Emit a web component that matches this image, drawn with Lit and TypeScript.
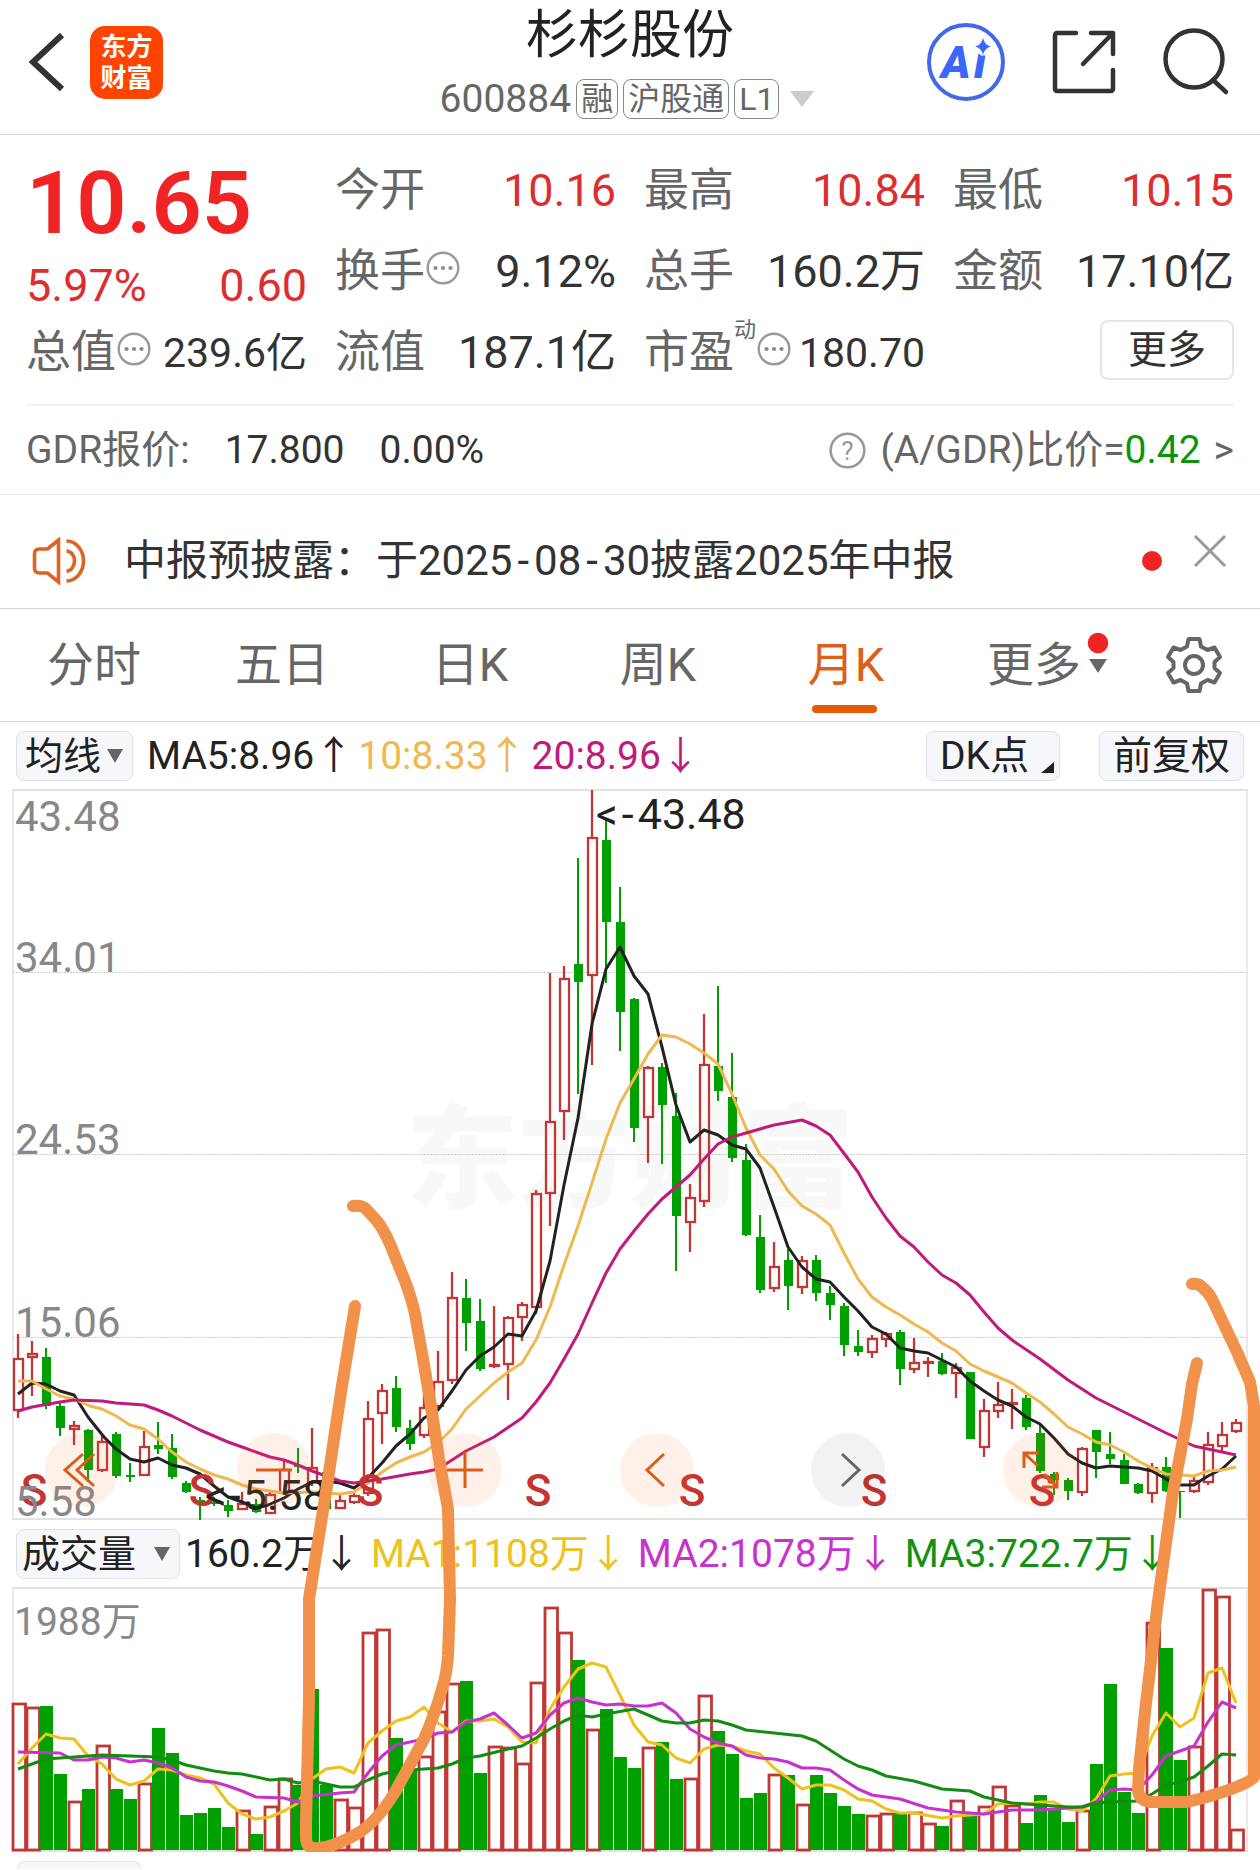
import { LitElement, html, svg, css } from "lit";
import { customElement, property, state } from "lit/decorators.js";
import { classMap } from "lit/directives/class-map.js";

type Candle = [kind: "r" | "g", high: number, top: number, bottom: number, low: number];

const STEP = 14;
const FIRST = 18;

const CANDLES: Candle[] = [
  ["r", 1335, 1359, 1412, 1419], ["r", 1342, 1354, 1359, 1397], ["g", 1349, 1358, 1407, 1410],
  ["g", 1402, 1407, 1429, 1437], ["r", 1422, 1426, 1431, 1446], ["g", 1430, 1431, 1471, 1483],
  ["r", 1437, 1442, 1472, 1473], ["g", 1433, 1435, 1477, 1479], ["g", 1464, 1476, 1478, 1483],
  ["r", 1432, 1447, 1477, 1477], ["g", 1423, 1446, 1450, 1455], ["g", 1435, 1449, 1478, 1480],
  ["g", 1482, 1484, 1493, 1494], ["g", 1498, 1501, 1503, 1521], ["g", 1498, 1503, 1505, 1507],
  ["g", 1501, 1506, 1512, 1518], ["r", 1493, 1504, 1511, 1511], ["g", 1500, 1505, 1513, 1514],
  ["r", 1493, 1495, 1515, 1515], ["r", 1462, 1470, 1495, 1496], ["g", 1449, 1466, 1468, 1474],
  ["r", 1429, 1468, 1484, 1487], ["g", 1468, 1473, 1510, 1511], ["r", 1496, 1501, 1510, 1510],
  ["r", 1493, 1496, 1504, 1505], ["r", 1402, 1419, 1495, 1497], ["r", 1385, 1391, 1415, 1445],
  ["g", 1377, 1389, 1428, 1433], ["g", 1421, 1429, 1445, 1451], ["r", 1395, 1408, 1437, 1439],
  ["r", 1352, 1382, 1408, 1410], ["r", 1273, 1298, 1382, 1385], ["g", 1280, 1299, 1324, 1352],
  ["g", 1300, 1322, 1370, 1372], ["r", 1307, 1365, 1367, 1369], ["r", 1317, 1318, 1366, 1401],
  ["r", 1303, 1305, 1319, 1342], ["r", 1191, 1194, 1309, 1315], ["r", 974, 1122, 1195, 1227],
  ["r", 967, 979, 1113, 1141], ["g", 859, 965, 983, 1095], ["r", 791, 838, 977, 1066],
  ["g", 820, 841, 923, 984], ["g", 888, 923, 1013, 1052], ["g", 999, 1000, 1129, 1143],
  ["r", 1067, 1068, 1119, 1164], ["g", 1064, 1068, 1106, 1165], ["g", 1094, 1117, 1217, 1272],
  ["r", 1185, 1198, 1224, 1253], ["r", 1015, 1065, 1203, 1208], ["g", 987, 1067, 1092, 1102],
  ["g", 1054, 1098, 1159, 1163], ["g", 1145, 1161, 1236, 1237], ["g", 1216, 1238, 1291, 1294],
  ["r", 1243, 1267, 1290, 1293], ["g", 1250, 1261, 1287, 1311], ["r", 1257, 1261, 1289, 1295],
  ["g", 1256, 1261, 1294, 1302], ["g", 1287, 1294, 1306, 1321], ["g", 1304, 1307, 1346, 1357],
  ["g", 1331, 1347, 1353, 1357], ["r", 1336, 1339, 1354, 1359], ["r", 1333, 1334, 1341, 1348],
  ["g", 1331, 1333, 1370, 1386], ["r", 1339, 1363, 1371, 1374], ["r", 1358, 1362, 1365, 1378],
  ["g", 1354, 1362, 1375, 1376], ["r", 1364, 1368, 1375, 1399], ["g", 1373, 1373, 1440, 1440],
  ["r", 1400, 1411, 1449, 1458], ["r", 1383, 1405, 1413, 1419], ["r", 1390, 1403, 1406, 1430],
  ["g", 1396, 1399, 1428, 1431], ["g", 1425, 1434, 1472, 1474], ["g", 1473, 1475, 1481, 1496],
  ["g", 1479, 1481, 1492, 1501], ["r", 1448, 1449, 1494, 1497], ["g", 1431, 1431, 1453, 1479],
  ["g", 1433, 1455, 1460, 1465], ["g", 1455, 1461, 1485, 1485], ["g", 1484, 1485, 1494, 1495],
  ["r", 1464, 1468, 1495, 1504], ["g", 1458, 1468, 1492, 1493], ["g", 1492, 1492, 1493, 1519],
  ["r", 1478, 1481, 1493, 1494], ["r", 1433, 1445, 1484, 1486], ["r", 1423, 1435, 1448, 1452],
  ["r", 1420, 1423, 1433, 1434],
];

/* Tops of the volume bars; each bar stands on VOLUME_BASE. */
const VOLUME_BASE = 1851;
const VOLUMES = [
  1704, 1708, 1707, 1775, 1802, 1790, 1746, 1790, 1800, 1784, 1729, 1754, 1816, 1814, 1809, 1828,
  1811, 1835, 1807, 1779, 1786, 1690, 1786, 1800, 1808, 1633, 1630, 1739, 1770, 1757, 1712, 1684,
  1682, 1774, 1747, 1748, 1764, 1683, 1608, 1633, 1661, 1730, 1710, 1758, 1769, 1748, 1743, 1780,
  1779, 1696, 1732, 1755, 1799, 1794, 1775, 1776, 1805, 1776, 1794, 1807, 1815, 1816, 1814, 1814,
  1813, 1824, 1827, 1801, 1816, 1807, 1787, 1806, 1824, 1796, 1810, 1823, 1811, 1765, 1685, 1793,
  1814, 1623, 1649, 1761, 1747, 1590, 1597, 1830,
];
/* Months whose volume bar is green although the candle is hollow. */
const FALLING_VOLUME = new Set([21]);

const MA5 =
  "18,1395 32,1384 46,1385 60,1392 74,1396 88,1418 104,1438 116,1450 130,1460 144,1463 158,1459 172,1466 186,1469 200,1475 214,1487 228,1498 242,1503 257,1509 268,1506 284,1499 298,1490 312,1483 326,1482 340,1484 354,1489 368,1479 382,1464 396,1447 410,1435 424,1419 438,1411 452,1392 466,1371 480,1357 494,1348 508,1335 522,1337 536,1312 550,1262 564,1186 578,1119 592,1025 606,970 620,948 634,977 648,995 662,1048 676,1106 690,1143 704,1131 718,1136 732,1146 746,1150 760,1169 774,1208 788,1248 802,1268 816,1280 830,1283 844,1298 858,1312 872,1328 886,1335 900,1349 914,1352 928,1354 942,1361 956,1368 970,1382 984,1392 998,1401 1012,1407 1026,1418 1040,1425 1054,1439 1068,1455 1082,1464 1096,1469 1110,1467 1124,1468 1138,1469 1152,1472 1166,1480 1180,1486 1194,1486 1208,1477 1222,1470 1236,1457";
const MA10 =
  "18,1382 32,1382 46,1390 60,1397 74,1400 90,1407 102,1410 116,1417 130,1426 144,1430 158,1440 172,1453 186,1463 200,1470 214,1476 228,1480 242,1486 256,1490 284,1494 312,1493 340,1495 354,1493 368,1484 382,1473 396,1464 410,1458 424,1453 438,1444 452,1430 466,1410 494,1384 508,1373 522,1364 536,1341 550,1308 564,1266 578,1227 592,1184 606,1140 620,1104 634,1080 648,1055 662,1036 676,1038 690,1045 704,1054 718,1065 732,1095 746,1129 760,1156 774,1170 788,1192 802,1207 816,1215 830,1226 844,1254 858,1280 872,1298 886,1308 900,1316 914,1325 928,1333 942,1344 956,1352 970,1365 984,1372 998,1378 1012,1384 1026,1394 1040,1403 1054,1415 1068,1428 1082,1435 1096,1443 1110,1446 1124,1453 1138,1462 1152,1469 1166,1475 1180,1476 1194,1477 1208,1472 1222,1471 1236,1468";
const MA20 =
  "18,1412 32,1408 60,1403 74,1401 102,1402 116,1404 144,1406 158,1411 172,1417 200,1431 228,1443 242,1448 270,1458 284,1461 298,1466 312,1472 326,1477 340,1482 354,1484 382,1480 410,1475 424,1473 438,1470 452,1461 466,1452 494,1438 522,1419 536,1403 550,1384 564,1360 578,1335 592,1304 606,1274 620,1250 634,1232 648,1215 662,1200 676,1188 690,1176 704,1160 718,1145 732,1138 760,1130 774,1126 802,1121 816,1127 830,1136 846,1157 858,1173 872,1198 886,1219 900,1237 914,1248 928,1263 942,1276 956,1284 970,1296 984,1313 998,1329 1012,1341 1040,1360 1068,1381 1096,1399 1124,1413 1152,1427 1166,1434 1194,1447 1222,1453 1236,1456";

const VOL_MA1 =
  "18,1765 32,1749 46,1735 60,1739 74,1740 88,1757 102,1765 116,1780 130,1786 144,1782 158,1770 172,1771 186,1776 200,1779 214,1785 228,1804 242,1815 256,1820 270,1818 284,1812 298,1804 312,1780 326,1770 340,1768 354,1774 368,1744 382,1732 396,1722 410,1718 424,1708 438,1724 452,1733 466,1722 480,1722 494,1720 508,1728 522,1743 536,1744 550,1710 564,1688 578,1670 592,1664 606,1668 620,1696 634,1726 648,1743 662,1746 676,1759 690,1764 704,1750 718,1746 732,1747 746,1752 760,1755 774,1769 788,1779 802,1790 816,1786 830,1786 844,1791 858,1800 872,1802 886,1810 900,1814 914,1814 942,1819 956,1817 970,1816 984,1815 998,1805 1012,1804 1026,1805 1040,1803 1054,1803 1068,1810 1082,1812 1096,1800 1110,1777 1124,1775 1138,1774 1152,1737 1166,1714 1180,1728 1194,1719 1208,1674 1222,1669 1236,1704";
const VOL_MA2 =
  "18,1753 60,1754 74,1761 88,1761 102,1758 116,1759 130,1763 144,1761 158,1764 172,1769 186,1778 200,1782 214,1783 228,1787 242,1792 256,1798 284,1799 298,1803 312,1797 340,1794 354,1793 368,1774 382,1757 396,1746 424,1740 438,1734 452,1733 466,1723 480,1720 494,1714 508,1726 522,1739 536,1734 550,1716 564,1704 578,1699 592,1703 606,1706 620,1705 634,1707 648,1707 662,1704 676,1714 690,1730 704,1738 718,1744 732,1747 746,1756 760,1759 774,1760 788,1763 802,1769 816,1769 830,1771 844,1781 858,1790 872,1796 900,1800 928,1809 956,1813 984,1815 1012,1811 1040,1811 1068,1809 1082,1808 1096,1803 1110,1791 1124,1790 1138,1791 1152,1776 1166,1757 1180,1752 1194,1747 1208,1723 1222,1703 1236,1709";
const VOL_MA3 =
  "18,1770 46,1760 74,1758 102,1756 130,1757 158,1758 172,1761 186,1766 200,1769 214,1772 228,1774 242,1775 270,1781 284,1780 298,1784 312,1782 340,1788 354,1788 368,1781 382,1775 396,1772 424,1770 438,1769 452,1765 466,1759 480,1757 508,1750 522,1747 536,1739 550,1730 564,1722 578,1716 592,1718 606,1715 634,1710 648,1716 662,1722 676,1724 690,1724 704,1721 718,1722 732,1726 746,1731 774,1734 802,1737 816,1742 830,1751 844,1760 858,1767 872,1771 886,1777 914,1782 942,1790 970,1792 984,1798 1012,1804 1040,1806 1068,1808 1082,1808 1096,1804 1110,1803 1138,1802 1152,1795 1166,1786 1180,1783 1194,1778 1208,1767 1222,1755 1236,1756";

const FONT = css`
  :host {
    display: block;
    font-family: Roboto, "Noto Sans CJK SC", sans-serif;
    line-height: 48px;
    color: #333;
  }
  * {
    box-sizing: border-box;
  }
  button,
  select {
    font: inherit;
    color: inherit;
    background: none;
    border: 0;
    padding: 0;
    margin: 0;
    cursor: pointer;
  }
  button {
    display: flex;
    align-items: center;
    justify-content: center;
  }
  svg {
    display: block;
    flex: none;
  }
`;

const dotsIcon = html`<svg width="34" height="34" viewBox="0 0 34 34" aria-hidden="true">
  <circle cx="17" cy="17" r="15.3" fill="none" stroke="#999" stroke-width="2.4" />
  <g fill="#8a8a8a"><circle cx="9.5" cy="17" r="2.1" /><circle cx="17" cy="17" r="2.1" /><circle cx="24.5" cy="17" r="2.1" /></g>
</svg>`;

@customElement("stock-header")
class StockHeader extends LitElement {
  static styles = [
    FONT,
    css`
      .bar {
        display: grid;
        grid-template-columns: 1fr auto 1fr;
        height: 135px;
        border-bottom: 1px solid #d4d4d4;
      }
      .side {
        display: flex;
        align-items: center;
        padding: 0 30px 10px 28px;
      }
      .left {
        gap: 22px;
      }
      .right {
        justify-content: flex-end;
        gap: 46px;
      }
      .logo {
        width: 73px;
        height: 73px;
        border-radius: 15px;
        background: #ff4400;
        color: #fff;
        font: 700 26px/31px "Noto Sans CJK SC", sans-serif;
        text-align: center;
        padding: 3px 8px;
      }
      .middle {
        display: flex;
        flex-direction: column;
        align-items: center;
      }
      h1 {
        margin: 0;
        font-size: 52px;
        font-weight: 400;
        line-height: 72px;
        color: #222;
      }
      .sub {
        display: flex;
        align-items: center;
        gap: 5px;
        height: 54px;
        color: #666;
        font-size: 39px;
        line-height: 40px;
      }
      .tag {
        height: 40px;
        border: 1px solid #888;
        border-radius: 8px;
        padding: 0 4px;
        font-size: 32px;
        line-height: 38px;
      }
      .more {
        padding: 0 6px;
      }
      .ai {
        font: italic 900 45px Roboto, sans-serif;
      }
    `,
  ];

  render() {
    return html`<header class="bar">
      <div class="side left">
        <button aria-label="返回">
          <svg width="40" height="64" viewBox="0 0 40 64" fill="none" stroke="#333" stroke-width="6"><path d="M34 5 5 32 34 59" /></svg>
        </button>
        <div class="logo">东方财富</div>
      </div>
      <div class="middle">
        <h1>杉杉股份</h1>
        <div class="sub">
          <span>600884</span><span class="tag">融</span><span class="tag">沪股通</span><span class="tag">L1</span>
          <button class="more" aria-label="展开">
            <svg width="24" height="16" viewBox="0 0 24 16"><path d="M0 0h24L12 16z" fill="#ccc" /></svg>
          </button>
        </div>
      </div>
      <div class="side right">
        <button aria-label="Ai">
          <svg width="80" height="80" viewBox="0 0 80 80">
            <circle cx="40" cy="40" r="37" fill="none" stroke="#4169e8" stroke-width="4" />
            <text class="ai" x="15 48" y="56" fill="#3a66fa">Ai</text>
            <path d="M57 16q1.500 7 8 8.500q-6.500 1.500-8 8.500q-1.500-7-8-8.500q6.500-1.500 8-8.500z" fill="#3a66fa" stroke="#fff" stroke-width="5" paint-order="stroke" />
          </svg>
        </button>
        <button aria-label="分享">
          <svg width="64" height="64" viewBox="0 0 64 64" fill="none" stroke="#333" stroke-width="4.500" stroke-linecap="round" stroke-linejoin="round">
            <path d="M24 3H5a2 2 0 0 0-2 2V59a2 2 0 0 0 2 2H59a2 2 0 0 0 2-2V40M39 3H61V24M60 4 31 34" />
          </svg>
        </button>
        <button aria-label="搜索">
          <svg width="68" height="68" viewBox="0 0 68 68" fill="none" stroke="#333" stroke-width="4.500" stroke-linecap="round">
            <circle cx="32" cy="31" r="28.500" /><path d="M51 52 64 64" />
          </svg>
        </button>
      </div>
    </header>`;
  }
}

@customElement("quote-panel")
class QuotePanel extends LitElement {
  static styles = [
    FONT,
    css`
      .quote {
        display: grid;
        grid-template-columns: repeat(4, 1fr);
        grid-auto-rows: 81px;
        column-gap: 28px;
        margin: 0 26px;
        padding: 15px 0 11px;
        border-bottom: 2px solid #f3f3f3;
        font-size: 45px;
        line-height: 82px;
      }
      .price {
        grid-row: span 2;
        color: #f02424;
      }
      .last {
        font-size: 88px;
        font-weight: 600;
        line-height: 106px;
      }
      .change {
        display: flex;
        justify-content: space-between;
        line-height: 60px;
        color: #db2f2f;
      }
      .item {
        display: flex;
        align-items: center;
        justify-content: space-between;
        white-space: nowrap;
      }
      .label {
        display: flex;
        align-items: center;
        color: #666;
      }
      .label svg {
        margin: 0 0 8px 1px;
      }
      sup {
        align-self: flex-start;
        font-size: 22px;
        line-height: 36px;
      }
      .up {
        color: #db2f2f;
      }
      .small {
        font-size: 41px;
      }
      .more {
        justify-self: end;
        align-self: start;
        width: 134px;
        height: 60px;
        margin-top: 8px;
        border: 2px solid #e6e6e6;
        border-radius: 8px;
        font-size: 39px;
        line-height: 56px;
      }
      .gdr {
        display: flex;
        align-items: center;
        height: 89px;
        padding: 0 26px;
        border-bottom: 1px solid #e6e6e6;
        font-size: 39px;
      }
      .gray {
        color: #666;
      }
      .gdr .num {
        margin-left: 35px;
      }
      .ratio {
        display: flex;
        align-items: center;
        margin-left: auto;
        color: #666;
        text-decoration: none;
      }
      .ratio svg {
        margin-right: 14px;
      }
      .ratio .down {
        color: #0c930c;
        margin-right: 13px;
      }
      .q {
        font-size: 26px;
      }
    `,
  ];

  private item(label: string, value: string, opts: { up?: boolean; info?: boolean; small?: boolean; sup?: string } = {}) {
    return html`<div class="item">
      <span class="label">${label}${opts.sup ? html`<sup>${opts.sup}</sup>` : null}${opts.info ? dotsIcon : null}</span>
      <span class=${classMap({ up: !!opts.up, small: !!opts.small })}>${value}</span>
    </div>`;
  }

  render() {
    return html`<section class="quote">
        <div class="price">
          <div class="last">10.65</div>
          <div class="change"><span>5.97%</span><span>0.60</span></div>
        </div>
        ${this.item("今开", "10.16", { up: true })} ${this.item("最高", "10.84", { up: true })}
        ${this.item("最低", "10.15", { up: true })} ${this.item("换手", "9.12%", { info: true })}
        ${this.item("总手", "160.2万")} ${this.item("金额", "17.10亿")}
        ${this.item("总值", "239.6亿", { info: true, small: true })} ${this.item("流值", "187.1亿")}
        ${this.item("市盈", "180.70", { info: true, small: true, sup: "动" })}
        <button class="more">更多</button>
      </section>
      <section class="gdr">
        <span class="gray">GDR报价:</span><span class="num">17.800</span><span class="num">0.00%</span>
        <a class="ratio" href="#gdr">
          <svg width="37" height="37" viewBox="0 0 37 37" fill="none" stroke="#999">
            <circle cx="18.500" cy="18.500" r="16.800" stroke-width="2.600" />
            <text class="q" x="18.500" y="28" text-anchor="middle" fill="#999" stroke="none">?</text>
          </svg>
          <span>(A/GDR)比价=</span><span class="down">0.42</span><span>&gt;</span>
        </a>
      </section>`;
  }
}

@customElement("notice-bar")
class NoticeBar extends LitElement {
  static styles = [
    FONT,
    css`
      .notice {
        display: flex;
        align-items: center;
        height: 114px;
        padding: 18px 32px 0;
        border-bottom: 1px solid #d4d4d4;
        font-size: 42px;
      }
      .text {
        margin-left: 35px;
        flex: 1;
      }
      .dash {
        margin: 0 5px;
      }
      .dot {
        width: 20px;
        height: 20px;
        border-radius: 50%;
        background: #f02424;
        margin-right: 30px;
      }
      .close {
        align-self: flex-start;
        width: 36px;
        height: 76px;
      }
    `,
  ];
  @state() private open = true;

  render() {
    if (!this.open) return null;
    return html`<div class="notice">
      <svg width="57" height="48" viewBox="0 0 56 48" fill="none" stroke="#de6322" stroke-width="3.600">
        <path d="M26 3V45L15 36H7q-5 0-5-5V17q0-5 5-5H15z" />
        <path d="M34 4a17 20 0 0 1 0 40M34 14a8 10 0 0 1 0 20" />
      </svg>
      <span class="text">中报预披露：于<time>2025<span class="dash">-</span>08<span class="dash">-</span>30</time>披露2025年中报</span>
      <span class="dot"></span>
      <button class="close" aria-label="关闭" @click=${() => (this.open = false)}>
        <svg width="34" height="34" viewBox="0 0 34 34" stroke="#999" stroke-width="3"><path d="M2 2 32 32M32 2 2 32" /></svg>
      </button>
    </div>`;
  }
}

@customElement("period-tabs")
class PeriodTabs extends LitElement {
  static styles = [
    FONT,
    css`
      .tabs {
        display: grid;
        grid-template-columns: repeat(6, 188fr) 132fr;
        height: 113px;
        border-bottom: 1px solid #d4d4d4;
        font-size: 47px;
        color: #666;
      }
      .tab {
        position: relative;
      }
      .active {
        color: #de5f17;
      }
      .active::after {
        content: "";
        position: absolute;
        bottom: 8px;
        left: 50%;
        width: 65px;
        margin-left: -34px;
        height: 8px;
        border-radius: 4px;
        background: #e65a08;
      }
      .word {
        position: relative;
      }
      .badge {
        position: absolute;
        left: 100%;
        top: 0;
        margin: -9px 0 0 6px;
      }
    `,
  ];
  @state() private current = 4;

  render() {
    const names = ["分时", "五日", "日K", "周K", "月K", "更多"];
    return html`<nav class="tabs">
      ${names.map(
        (name, i) => html`<button class=${classMap({ tab: true, active: i === this.current })} @click=${() => (this.current = i)}>
          <span class="word">${name}${i === 5
              ? html`<svg class="badge" width="22" height="42" viewBox="0 0 22 42">
                  <circle cx="11" cy="11" r="10.300" fill="#f02424" /><path d="M2 27H20L11 41z" fill="#666" />
                </svg>`
              : null}</span>
        </button>`,
      )}
      <button aria-label="设置">
        <svg width="58" height="58" viewBox="0 0 58 58" fill="none" stroke="#666" stroke-width="4" stroke-linejoin="round">
          <path d="M23.500 3H34.500L36 10.500L42.500 14L49.500 11.500L55 21L49.500 26V32L55 37L49.500 46.500L42.500 44L36 47.500L34.500 55H23.500L22 47.500L15.500 44L8.500 46.500L3 37L8.500 32V26L3 21L8.500 11.500L15.500 14L22 10.500z" />
          <circle cx="29" cy="29" r="9" />
        </svg>
      </button>
    </nav>`;
  }
}

@customElement("pick-list")
class PickList extends LitElement {
  static styles = [
    FONT,
    css`
      .pick {
        display: grid;
        align-items: center;
      }
      .pick > * {
        grid-area: 1 / 1;
      }
      select {
        appearance: none;
        height: 50px;
        border: 1px solid #dfe2e8;
        border-radius: 8px;
        background: #f6f7fa;
        color: #222;
        font-size: 38px;
        line-height: 48px;
        padding: 0 30px 0 8px;
      }
      .wide {
        padding: 0 42px 0 5px;
      }
      svg {
        justify-self: end;
        margin-right: 10px;
        pointer-events: none;
      }
    `,
  ];
  @property() value = "";
  @property() name = "";
  @property({ type: Boolean }) wide = false;

  render() {
    return html`<label class="pick">
      <select class=${classMap({ wide: this.wide })} aria-label=${this.name}><option>${this.value}</option></select>
      <svg width="16" height="14" viewBox="0 0 16 14"><path d="M0 0H16L8 14z" fill="#666" /></svg>
    </label>`;
  }
}

@customElement("price-chart")
class PriceChart extends LitElement {
  static styles = [
    FONT,
    css`
      .wrap {
        position: relative;
      }
      .plot {
        width: 100%;
        height: auto;
      }
      .axis {
        font-size: 42px;
        fill: #888;
      }
      .mark {
        font-size: 43px;
        fill: #222;
      }
      .sell {
        font-size: 44px;
        font-weight: 500;
        fill: #c43432;
        text-anchor: middle;
      }
      .water {
        font: 900 112px "Noto Sans CJK SC", sans-serif;
        fill: #f8f8f8;
      }
      .line {
        fill: none;
        stroke-width: 3;
        stroke-linejoin: round;
      }
      .tools {
        position: absolute;
        inset: auto 0 13px 0;
        display: flex;
        justify-content: space-between;
        padding: 0 183px 0 45px;
      }
      .tool {
        width: 74px;
        height: 74px;
        border-radius: 50%;
        background: rgba(255, 110, 50, 0.1);
      }
      .off {
        background: rgba(0, 0, 0, 0.05);
      }
    `,
  ];

  private candle([kind, high, top, bottom, low]: Candle, i: number) {
    const x = FIRST + STEP * i;
    if (kind === "g") {
      return svg`<g fill="#00a000"><rect x=${x - 1} y=${high} width="2" height=${Math.max(low - high, 1)} />
        <rect x=${x - 4} y=${top} width="9" height=${Math.max(bottom - top, 1)} /></g>`;
    }
    return svg`<g fill="none" stroke="#c03836" stroke-width="2.300"><path d="M${x} ${high}V${top}M${x} ${bottom}V${low}" />
      <rect x=${x - 4} y=${top + 1} width="9" height=${Math.max(bottom - top - 2, 1)} /></g>`;
  }

  private tool(name: string, path: string, off = false) {
    return html`<button class=${classMap({ tool: true, off })} aria-label=${name}>
      <svg width="40" height="40" viewBox="-20 -20 40 40" fill="none" stroke=${off ? "#666" : "#dc5c18"} stroke-width="3"><path d=${path} /></svg>
    </button>`;
  }

  render() {
    return html`<div class="wrap">
      <svg class="plot" viewBox="0 790 1260 731" role="img" aria-label="月K线">
        <text class="water" x="406" y="1200">东方财富</text>
        <g fill="none" stroke="#e2e2e2" stroke-width="2">
          <path d="M12 791H1248M12 1520H1248" /><path d="M13 791V1520M1247 791V1520" stroke-width="1.500" />
        </g>
        <path d="M13 973.500H1247M13 1155.500H1247M13 1338.500H1247" stroke="#ccc" stroke-dasharray="2 1" />
        ${CANDLES.map((c, i) => this.candle(c, i))}
        <polyline class="line" points=${MA5} stroke="#222" />
        <polyline class="line" points=${MA10} stroke="#f0b850" />
        <polyline class="line" points=${MA20} stroke="#c01a7c" />
        ${[34, 202, 370, 538, 692, 874, 1042].map((x) => svg`<text class="sell" x=${x} y="1507">S</text>`)}
        <text class="axis" x="15" y="832">43.48</text>
        <text class="axis" x="15" y="973">34.01</text>
        <text class="axis" x="15" y="1155">24.53</text>
        <text class="axis" x="15" y="1338">15.06</text>
        <text class="axis" x="15" y="1517">5.58</text>
        <text class="mark" x="596" y="830">&lt;<tspan dx="4">-</tspan><tspan dx="4">43.48</tspan></text>
        <text class="mark" x="205" y="1511">&lt;<tspan dx="2">-</tspan><tspan dx="2">5.58</tspan></text>
      </svg>
      <div class="tools">
        ${this.tool("快退", "M1-16-17 0 1 16M12-16-5 0 12 16")} ${this.tool("缩小", "M-18 0H18")}
        ${this.tool("放大", "M-18 0H18M0-18V18")} ${this.tool("后退", "M7-16-10 0 7 16")}
        ${this.tool("前进", "M-6-16 11 0-6 16", true)}
        ${this.tool("全屏", "M-1-17H-16V-2M-16-17-2-4M2 17H17V2M17 17 4 4")}
      </div>
    </div>`;
  }
}

@customElement("volume-chart")
class VolumeChart extends LitElement {
  static styles = [
    FONT,
    css`
      .plot {
        width: 100%;
        height: auto;
      }
      .axis {
        font-size: 39px;
        fill: #888;
      }
      .line {
        fill: none;
        stroke-width: 3;
        stroke-linejoin: round;
      }
    `,
  ];

  render() {
    return html`<svg class="plot" viewBox="0 1588 1260 265" role="img" aria-label="成交量">
      <g fill="none" stroke="#e2e2e2" stroke-width="2">
        <path d="M12 1589H1248M12 1852H1248" /><path d="M13 1589V1852M1247 1589V1852" stroke-width="1.500" />
      </g>
      <text class="axis" x="14" y="1636">1988万</text>
      ${VOLUMES.map((top, i) => {
        const x = FIRST + STEP * i;
        return CANDLES[i][0] === "g" || FALLING_VOLUME.has(i)
          ? svg`<rect x=${x - 6} y=${top} width="13" height=${VOLUME_BASE - top} fill="#00a000" />`
          : svg`<rect x=${x - 5} y=${top + 1} width="12.500" height=${VOLUME_BASE - top - 1} fill="none" stroke="#c03836" stroke-width="2.800" />`;
      })}
      <polyline class="line" points=${VOL_MA1} stroke="#eec21e" />
      <polyline class="line" points=${VOL_MA2} stroke="#c832cc" />
      <polyline class="line" points=${VOL_MA3} stroke="#128c12" />
    </svg>`;
  }
}

@customElement("app-root")
class AppRoot extends LitElement {
  static styles = [
    FONT,
    css`
      :host {
        background: #fff;
      }
      .charts {
        position: relative;
      }
      .row {
        display: flex;
        align-items: center;
        height: 67px;
        padding: 0 16px;
        white-space: nowrap;
        font-size: 39px;
        color: #222;
      }
      .average .value {
        margin-right: 5px;
      }
      .average .value:first-of-type {
        margin-left: 14px;
      }
      .volume .value {
        margin-right: 10px;
      }
      .volume .value:first-of-type {
        margin-left: 5px;
      }
      .gold {
        color: #f0b850;
      }
      .rose {
        color: #c01a7c;
      }
      .yellow {
        color: #eec21e;
      }
      .violet {
        color: #c832cc;
      }
      .green {
        color: #129212;
      }
      .side {
        display: flex;
        gap: 39px;
        margin-left: auto;
      }
      .box {
        height: 50px;
        border: 1px solid #dfe2e8;
        border-radius: 8px;
        background: #f6f7fa;
        padding: 0 13px;
      }
      .corner {
        align-self: flex-end;
        margin: 0 -8px 7px 12px;
      }
      .next {
        width: 124px;
        height: 8px;
        margin: 9px 17px 0;
        border: 1px solid #dfe2e8;
        border-bottom: 0;
        border-radius: 8px 8px 0 0;
        background: #f6f7fa;
      }
      .ink {
        position: absolute;
        inset: 0;
        width: 100%;
        height: 100%;
        pointer-events: none;
      }
    `,
  ];

  render() {
    return html`<main>
      <stock-header></stock-header>
      <quote-panel></quote-panel>
      <notice-bar></notice-bar>
      <period-tabs></period-tabs>
      <div class="row average">
        <pick-list name="指标" value="均线"></pick-list>
        <span class="value">MA5:8.96↑</span><span class="value gold">10:8.33↑</span><span class="value rose">20:8.96↓</span>
        <div class="side">
          <button class="box">DK点<svg class="corner" width="13" height="11" viewBox="0 0 13 11"><path d="M13 0V11H0z" fill="#222" /></svg></button>
          <button class="box">前复权</button>
        </div>
      </div>
      <div class="charts">
        <price-chart></price-chart>
        <div class="row volume">
          <pick-list name="副图" value="成交量" wide></pick-list>
          <span class="value">160.2万↓</span><span class="value yellow">MA1:1108万↓</span
          ><span class="value violet">MA2:1078万↓</span><span class="value green">MA3:722.7万↓</span>
        </div>
        <volume-chart></volume-chart>
        <svg class="ink" viewBox="0 790 1260 1063" preserveAspectRatio="none" fill="none" stroke="#f2914a" stroke-width="12" stroke-linecap="round" stroke-linejoin="round" aria-hidden="true">
          <path d="M353 1207Q362 1206 366 1210L377 1222Q384 1231 390 1245L405 1282Q412 1301 415 1315L423 1360L431 1407L439 1460L448 1510L450 1600L448 1657Q447 1674 442 1690Q435 1715 424 1740L395 1793Q378 1821 360 1833Q345 1842 333 1846Q322 1850 313 1849Q306 1848 306 1838V1823L309 1700V1600L328 1480L341 1393L355 1307" />
          <path d="M1192 1285Q1199 1284 1203 1289Q1208 1293 1212 1300L1220 1317L1237 1353L1250 1383L1254 1407V1778Q1252 1783 1223 1793Q1205 1799 1187 1803H1150Q1138 1801 1138 1790L1139 1770L1145 1713L1157 1610L1173 1493L1187 1420L1192 1385L1197 1364" />
        </svg>
      </div>
      <div class="next"></div>
    </main>`;
  }
}
